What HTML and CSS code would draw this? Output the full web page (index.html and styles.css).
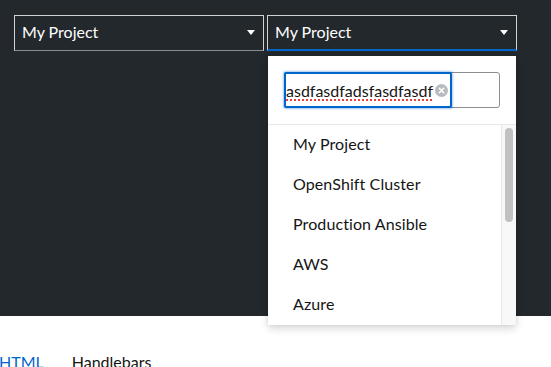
FILE: index.html
```html
<!DOCTYPE html>
<html>
<head>
<meta charset="utf-8">
<link rel="stylesheet" href="styles.css">
</head>
<body>
<div class="stage">
  <div class="select">
    <button class="toggle"><span class="toggle-text">My Project</span><span class="caret"></span></button>
  </div>
  <div class="select open">
    <button class="toggle expanded"><span class="toggle-text">My Project</span><span class="caret"></span></button>
    <div class="menu">
      <div class="search">
        <div class="search-box">
          <div class="search-field">
            <span class="search-text">asdfasdfadsfasdfasdf</span>
            <span class="clear"><svg width="13" height="13" viewBox="0 0 13 13"><circle cx="6.5" cy="6.5" r="6.5" fill="#b8bbbe"/><path d="M4.3 4.3l4.4 4.4M8.7 4.3l-4.4 4.4" stroke="#fff" stroke-width="1.6" stroke-linecap="round"/></svg></span>
          </div>
        </div>
      </div>
      <div class="list-wrap">
        <ul class="list">
          <li class="item">My Project</li>
          <li class="item">OpenShift Cluster</li>
          <li class="item">Production Ansible</li>
          <li class="item">AWS</li>
          <li class="item">Azure</li>
          <li class="item">Google Cloud</li>
          <li class="item">IBM Cloud</li>
          <li class="item">Oracle Cloud</li>
          <li class="item">Staging</li>
          <li class="item">Development</li>
        </ul>
        <div class="scrollbar"><div class="thumb"></div></div>
      </div>
    </div>
  </div>
</div>
<div class="tabs">
  <span class="tab active">HTML</span>
  <span class="tab">Handlebars</span>
</div>
</body>
</html>
```

FILE: styles.css
```css
* { box-sizing: border-box; }
html, body { margin: 0; padding: 0; background: #fff; }
body { font-family: Lato, "Open Sans", sans-serif; font-size: 16px; color: #151515; }

.stage {
  background: #23282c;
  height: 316px;
  padding: 15px 14px;
  display: flex;
  gap: 3px;
  align-items: flex-start;
}

.select { position: relative; width: 250px; }

.toggle {
  width: 100%;
  height: 36px;
  display: flex;
  align-items: center;
  justify-content: space-between;
  padding: 0 8px 2px 7px;
  background: transparent;
  border: 1px solid #d2d2d2;
  border-bottom-color: #8a8d90;
  color: #fff;
  font-family: inherit;
  font-size: 16px;
  cursor: pointer;
}
.toggle.expanded { border-bottom: 2px solid #0066cc; padding-bottom: 1px; }
.toggle-text { line-height: 20px; }
.caret {
  width: 0; height: 0;
  border-left: 4.5px solid transparent;
  border-right: 4.5px solid transparent;
  border-top: 5px solid #fff;
  margin-top: 1px;
}

.menu {
  position: absolute;
  top: 41px;
  left: 1px;
  width: 248px;
  background: #fff;
  box-shadow: 0 4px 8px rgba(3,3,3,0.14), 0 0 4px rgba(3,3,3,0.08);
}

.search { padding: 16px; border-bottom: 1px solid #e8e8e8; }
.search-box {
  height: 36px;
  border: 1px solid #8a8d90;
  border-radius: 3px;
  position: relative;
}
.search-field {
  position: absolute;
  left: -1px; top: -1px;
  width: 168px;
  height: 36px;
  border: 2px solid #0066cc;
  border-radius: 2px;
  box-shadow: 0 0 2px 1px rgba(0,102,204,0.35);
  display: flex;
  align-items: center;
  justify-content: space-between;
  padding: 0 1px 0 0;
  background: #fff;
  overflow: hidden;
}
.search-text {
  font-size: 16px;
  color: #151515;
  white-space: nowrap;
  text-decoration: underline dotted #e8403f;
  text-decoration-thickness: 2px;
  text-underline-offset: 3px;
}
.clear { display: flex; margin-right: 1px; margin-top: 1px; }

.list-wrap { display: flex; height: 200px; }
.list {
  flex: 1;
  list-style: none;
  margin: 0;
  padding: 0;
  overflow: hidden;
}
.scrollbar {
  width: 15px;
  background: #f8f8f8;
  border-left: 1px solid #e8e8e8;
  padding: 3px 3px 0 3px;
}
.thumb {
  height: 94px;
  background: #c1c1c1;
  border-radius: 4px;
}
.item {
  height: 40px;
  display: flex;
  align-items: center;
  padding-left: 25px;
  padding-bottom: 3px;
  letter-spacing: 0.1px;
}

.tabs {
  display: flex;
  gap: 28px;
  margin-left: -1px;
  padding-top: 36px;
}
.tab { font-size: 16px; line-height: 20px; color: #151515; }
.tab.active { color: #0066cc; }
```
